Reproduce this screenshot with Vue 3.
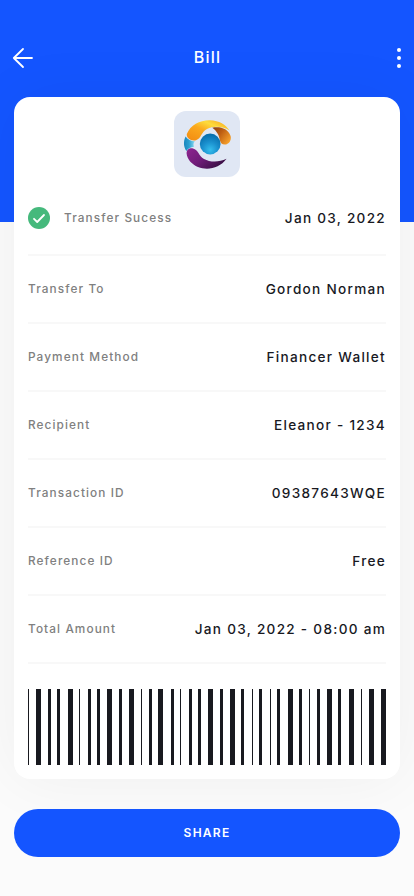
<script setup>
const rows = [
  { label: 'Transfer To', value: 'Gordon Norman' },
  { label: 'Payment Method', value: 'Financer Wallet' },
  { label: 'Recipient', value: 'Eleanor - 1234' },
  { label: 'Transaction ID', value: '09387643WQE' },
  { label: 'Reference ID', value: 'Free' },
  { label: 'Total Amount', value: 'Jan 03, 2022 - 08:00 am' },
]
// [offset, width] of each barcode stripe
const bars = [
  [0, 1], [8, 5], [20, 3], [29, 3], [40, 5], [51, 1], [60, 3], [69, 3], [79, 5],
  [91, 3], [101, 5], [113, 1], [121, 3], [130, 5], [143, 3], [152, 1], [161, 3],
  [170, 3], [180, 5], [192, 3], [202, 5], [213, 3], [224, 1], [231, 3], [242, 1],
  [249, 3], [260, 5], [271, 3], [281, 1], [289, 3], [299, 5], [310, 3], [321, 5],
  [333, 1], [341, 5], [353, 5],
]
</script>

<template>
  <div class="page">
    <header class="header">
      <button class="icon-btn" aria-label="Back">
        <svg width="22" height="22" viewBox="0 0 22 22" fill="none" stroke="#fff" stroke-width="1.8" stroke-linecap="round" stroke-linejoin="round">
          <path d="M11 2 1.8 11 11 20M1.8 11H20" />
        </svg>
      </button>
      <h1 class="title">Bill</h1>
      <button class="icon-btn" aria-label="More">
        <svg width="4" height="22" viewBox="0 0 4 22" fill="#fff">
          <circle cx="2" cy="3" r="2" /><circle cx="2" cy="11" r="2" /><circle cx="2" cy="19" r="2" />
        </svg>
      </button>
    </header>

    <main class="card">
      <svg class="logo" width="66" height="66" viewBox="0 0 66 66">
        <defs>
          <linearGradient id="gold" x1="0" y1="1" x2="1" y2="0">
            <stop offset="0" stop-color="#f28a12" /><stop offset=".45" stop-color="#fba91d" />
            <stop offset=".68" stop-color="#fddc3c" /><stop offset="1" stop-color="#f79a1c" />
          </linearGradient>
          <linearGradient id="copper" x1="0" y1="0" x2="1" y2=".7">
            <stop offset="0" stop-color="#8c3f0c" /><stop offset=".45" stop-color="#bd5d12" /><stop offset="1" stop-color="#f6a02b" />
          </linearGradient>
          <linearGradient id="plum" x1="0" y1="0" x2="1" y2=".6">
            <stop offset="0" stop-color="#8d2590" /><stop offset=".5" stop-color="#701d79" /><stop offset="1" stop-color="#3a1045" />
          </linearGradient>
          <linearGradient id="sky" x1="0" y1="0" x2="1" y2="0">
            <stop offset="0" stop-color="#1a86bd" /><stop offset=".45" stop-color="#2b9fd0" /><stop offset="1" stop-color="#8fdcf2" />
          </linearGradient>
          <radialGradient id="ball" cx=".5" cy=".78" r=".72">
            <stop offset="0" stop-color="#35bdec" /><stop offset=".5" stop-color="#1b91cf" /><stop offset="1" stop-color="#0870ae" />
          </radialGradient>
        </defs>
        <rect width="66" height="66" rx="12" fill="#e0e7f4" />
        <path d="M11.6 25.4C13.5 28.6 17 29.9 21 30.3C19.2 32 19.2 34 20 35.8C17 36 14 37.6 12.3 40C9.4 35.5 9.3 30 11.6 25.4Z" fill="url(#sky)" />
        <path d="M12.8 23C16.5 13.8 26 9 36 9.2C45 9.5 52 13.5 55.5 19.5C48.5 15 39.5 14.8 33 18C27 21 27.5 27.5 22 29.2C17 30.4 12.2 27 12.8 23Z" fill="url(#gold)" />
        <path d="M38.3 16.7C46 15.2 53.8 17.2 56.6 25C57.8 29.3 54.8 33.6 50.8 33.6C45 33.5 46.2 26.4 43.7 22.7C42.2 20.2 40.5 18 38.3 16.7Z" fill="url(#copper)" />
        <circle cx="36.2" cy="33" r="10.4" fill="url(#ball)" />
        <path d="M12.6 42.5C12.4 38.5 15.5 36.8 19 37.4C24.5 38.7 24.5 44.8 30 47.9C36 51.2 44.5 51.5 52.6 47.8C45.5 57.4 33.5 59.6 24 56C17.8 53.5 13 48 12.6 42.5Z" fill="url(#plum)" />
      </svg>

      <div class="row status">
        <div class="state">
          <svg width="22" height="22" viewBox="0 0 22 22" fill="none">
            <circle cx="11" cy="11" r="11" fill="#45b97c" />
            <path d="m6 11.8 3.2 3.2 6.8-7" stroke="#fff" stroke-width="1.8" stroke-linecap="round" stroke-linejoin="round" />
          </svg>
          <span class="label">Transfer Sucess</span>
        </div>
        <span class="value">Jan 03, 2022</span>
      </div>
      <div v-for="row in rows" :key="row.label" class="row">
        <span class="label">{{ row.label }}</span>
        <span class="value">{{ row.value }}</span>
      </div>

      <svg class="barcode" width="358" height="76" viewBox="0 0 358 76" fill="#18191f" shape-rendering="crispEdges">
        <rect v-for="[x, w] in bars" :key="x" :x="x" y="0" :width="w" height="76" />
      </svg>
    </main>

    <button class="share">SHARE</button>
  </div>
</template>

<style>
body {
  background: #fbfbfb;
}
</style>

<style scoped>
.page {
  box-sizing: border-box;
  width: 414px;
  height: 896px;
  overflow: hidden;
  padding: 44px 14px 0;
  background: linear-gradient(#1455ff 222px, #fbfbfb 222px);
  font-family: Inter, "Liberation Sans", sans-serif;
}
.header {
  display: flex;
  align-items: center;
  justify-content: space-between;
  height: 28px;
  margin: 0 -2px 25px;
}
.icon-btn {
  display: flex;
  width: 22px;
  padding: 0;
  border: 0;
  background: none;
}
.icon-btn:last-child {
  justify-content: flex-end;
  padding-right: 1px;
}
.title {
  margin: 0;
  padding: 0 0 2px 1px;
  color: #fff;
  font-size: 16px;
  font-weight: 500;
  line-height: 26px;
  letter-spacing: 1.2px;
}
.card {
  display: flex;
  flex-direction: column;
  box-sizing: border-box;
  height: 682px;
  padding: 14px 14px 0;
  border-radius: 16px;
  background: #fff;
  box-shadow: 0 0 64px rgba(24, 25, 31, 0.05);
}
.logo {
  align-self: center;
  flex: none;
}
.row {
  display: flex;
  align-items: center;
  justify-content: space-between;
  box-sizing: border-box;
  height: 68px;
  border-bottom: 2px solid #f8f8f8;
}
.status {
  height: 79px;
  padding-top: 5px;
}
.state {
  display: flex;
  align-items: center;
  gap: 14px;
}
.label {
  color: #808080;
  font-size: 11.8px;
  font-weight: 500;
  line-height: 18px;
  letter-spacing: 1.1px;
}
.value {
  color: #18191f;
  font-size: 13.6px;
  font-weight: 500;
  line-height: 20px;
  letter-spacing: 1.28px;
}
.barcode {
  flex: none;
  margin-top: 25px;
}
.share {
  display: block;
  width: 100%;
  height: 48px;
  margin-top: 30px;
  padding: 0 0 1px;
  border: 0;
  border-radius: 24px;
  background: #1455ff;
  color: #fff;
  font-family: inherit;
  font-size: 12px;
  font-weight: 600;
  letter-spacing: 1.25px;
}
</style>
